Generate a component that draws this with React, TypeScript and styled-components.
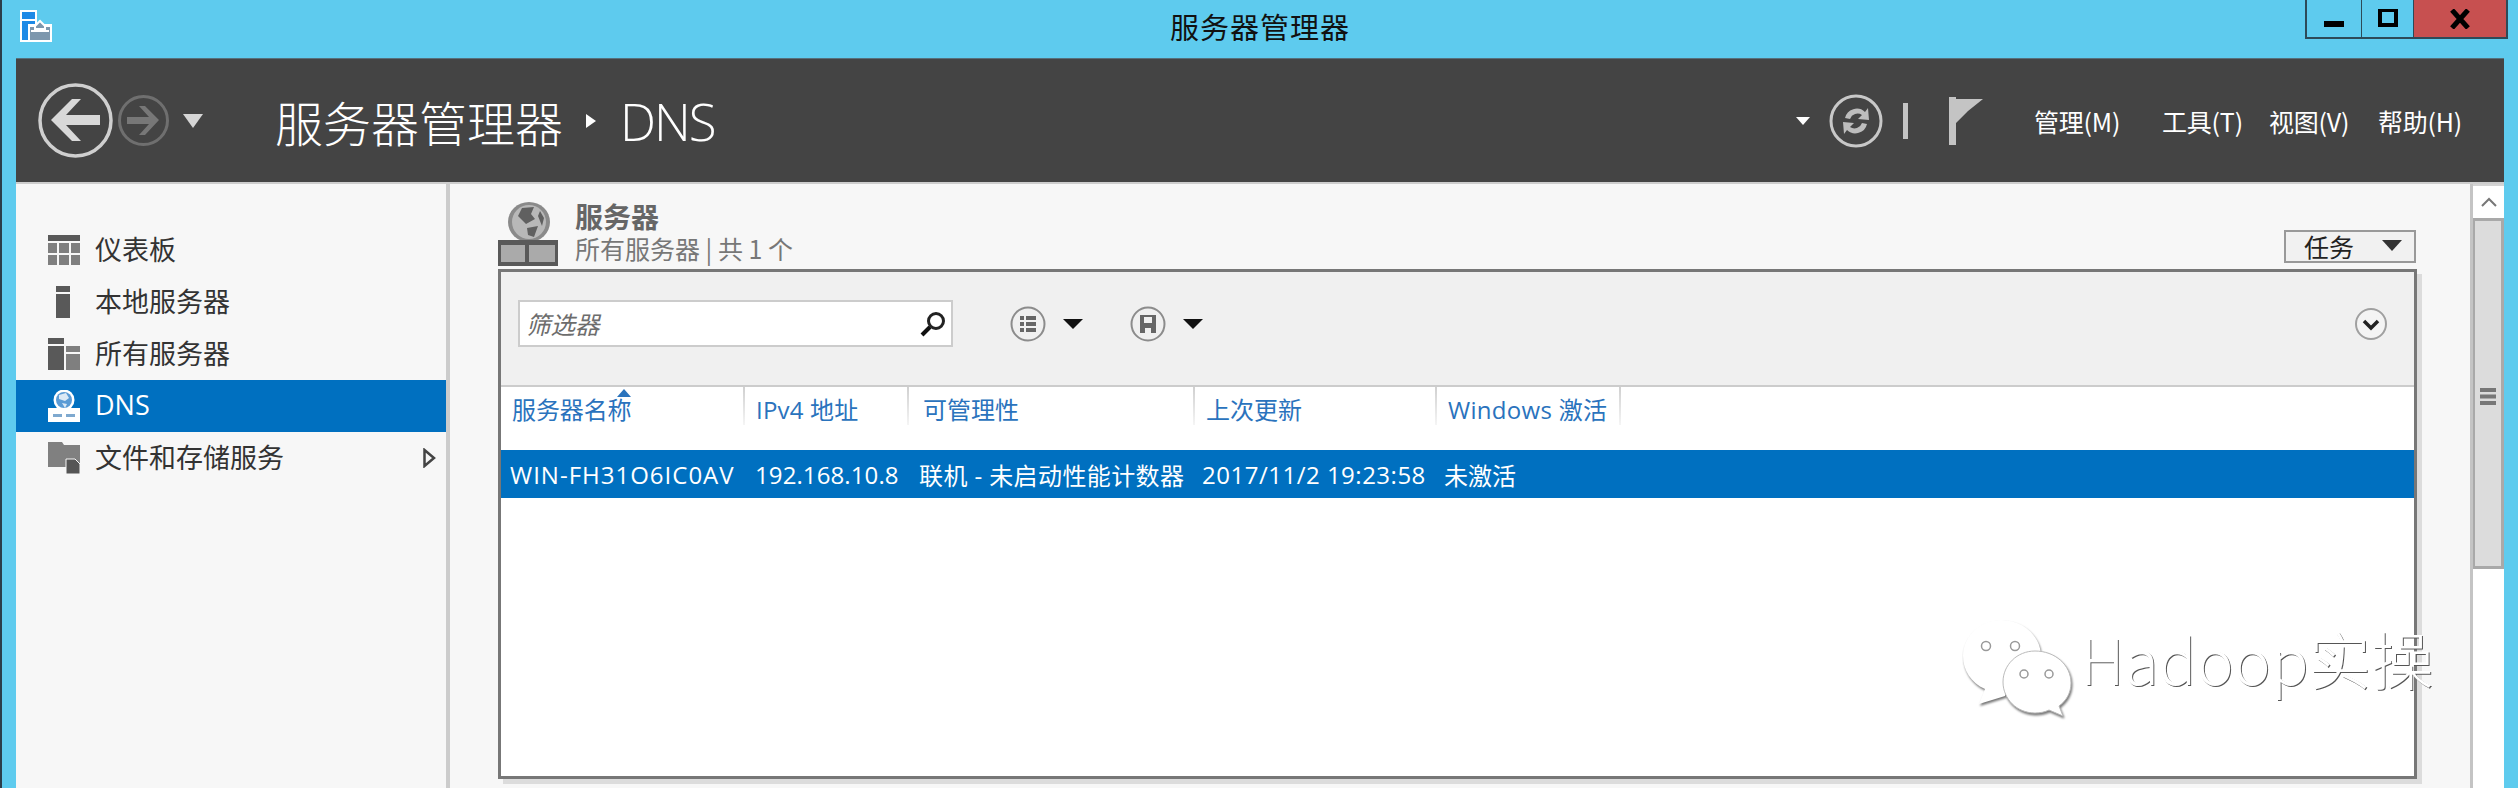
import styled, { createGlobalStyle } from "styled-components";

const CJK = `"Noto Sans CJK SC", "Noto Sans", sans-serif`;
const LATIN = `"Open Sans", "Noto Sans CJK SC", sans-serif`;

const GlobalStyle = createGlobalStyle`
  html, body {
    margin: 0;
    padding: 0;
    background: #5ecbee;
  }
  * {
    box-sizing: border-box;
  }
`;

const Shell = styled.div`
  width: 2518px;
  height: 788px;
  overflow: hidden;
  position: relative;
  display: flex;
  flex-direction: column;
  background: #5ecbee;
  border-left: 2px solid #2b3e4a;
  font-family: ${CJK};
`;

const TitleBar = styled.header`
  height: 58px;
  flex: none;
  display: grid;
  grid-template-columns: 1fr auto 1fr;
  align-items: start;
`;

const AppIcon = styled.svg`
  display: block;
  margin: 10px 0 0 18px;
`;

const WindowTitle = styled.div`
  font-size: 29px;
  line-height: 52px;
  color: #111;
  letter-spacing: 1px;
`;

const WindowButtons = styled.div`
  justify-self: end;
  margin-right: 10px;
  height: 39px;
  display: flex;
  border: 2px solid #2d4a58;
  border-top: none;
`;

const WindowButton = styled.div<{ $w: number; $close?: boolean }>`
  width: ${(p) => p.$w}px;
  display: flex;
  align-items: center;
  justify-content: center;
  background: ${(p) => (p.$close ? "#c75050" : "transparent")};
  border-right: ${(p) => (p.$close ? "none" : "1px solid #2d4a58")};
`;

const Frame = styled.div`
  flex: 1;
  min-height: 0;
  display: flex;
  flex-direction: column;
  margin: 0 14px 0 14px;
`;

const CommandBar = styled.div`
  height: 126px;
  flex: none;
  display: flex;
  align-items: center;
  padding: 0 43px 0 22px;
  background: #444444;
  border-bottom: 2px solid #cdcdcd;
  border-top: 1px solid #56707c;
`;

const NavGroup = styled.div`
  display: flex;
  align-items: center;
`;

const Crumb = styled.div`
  display: flex;
  align-items: center;
  margin-left: 72px;
  color: #fff;
  font-size: 48px;
  font-weight: 300;
  line-height: 60px;
`;

const CrumbArrow = styled.span`
  width: 0;
  height: 0;
  margin: 0 24px 0 23px;
  border-left: 10px solid #fff;
  border-top: 7px solid transparent;
  border-bottom: 7px solid transparent;
`;

const CrumbLeaf = styled.span`
  font-family: ${LATIN};
  font-size: 51px;
  font-weight: 300;
  letter-spacing: -2px;
`;

const CommandRight = styled.div`
  margin-left: auto;
  display: flex;
  align-items: center;
`;

const Caret = styled.span<{ $w: number; $h: number; $color: string; $ml?: number }>`
  display: block;
  flex: none;
  width: 0;
  height: 0;
  margin-left: ${(p) => p.$ml ?? 0}px;
  border-left: ${(p) => p.$w / 2}px solid transparent;
  border-right: ${(p) => p.$w / 2}px solid transparent;
  border-top: ${(p) => p.$h}px solid ${(p) => p.$color};
`;

const BarSeparator = styled.span`
  width: 5px;
  height: 36px;
  margin: 0 41px 0 20px;
  background: #c4c4c4;
`;

const MenuItem = styled.span<{ $ml: number; $w: number }>`
  margin-left: ${(p) => p.$ml}px;
  width: ${(p) => p.$w}px;
  color: #fff;
  font-size: 25px;
  line-height: 30px;
  letter-spacing: -0.2px;
  white-space: nowrap;
`;

const Body = styled.div`
  flex: 1;
  min-height: 0;
  display: flex;
  background: #f7f7f7;
`;

const Sidebar = styled.nav`
  width: 434px;
  flex: none;
  padding-top: 40px;
  border-right: 4px solid #cccccc;
`;

const NavItem = styled.div<{ $active?: boolean }>`
  height: 52px;
  display: flex;
  align-items: center;
  padding-left: 32px;
  gap: 15px;
  font-size: 27px;
  color: ${(p) => (p.$active ? "#fff" : "#333")};
  background: ${(p) => (p.$active ? "#0070c0" : "transparent")};
`;

const NavIcon = styled.svg`
  width: 32px;
  height: 32px;
  flex: none;
`;

const NavLabel = styled.span<{ $latin?: boolean }>`
  flex: 1;
  padding-bottom: 3px;
  font-family: ${(p) => (p.$latin ? LATIN : CJK)};
`;

const ExpandArrow = styled.svg`
  margin-right: 10px;
`;

const Main = styled.main`
  flex: 1;
  min-width: 0;
  padding: 0 53px 9px 48px;
  display: flex;
  flex-direction: column;
`;

const SectionHead = styled.div`
  height: 85px;
  flex: none;
  display: flex;
  align-items: flex-end;
`;

const SectionIcon = styled.svg`
  margin-bottom: 3px;
  flex: none;
`;

const SectionText = styled.div`
  margin: 0 0 6px 17px;
  display: flex;
  flex-direction: column;
`;

const SectionTitle = styled.div`
  font-size: 28px;
  line-height: 34px;
  font-weight: 700;
  color: #666;
`;

const SectionSub = styled.div`
  font-size: 25px;
  line-height: 30px;
  color: #777;
`;

const TaskButton = styled.div`
  margin: 0 1px 6px auto;
  width: 132px;
  height: 33px;
  display: flex;
  align-items: center;
  padding: 0 12px 2px 18px;
  justify-content: space-between;
  border: 2px solid #999;
  background: #f1f1f1;
  font-size: 25px;
  color: #222;
`;

const Panel = styled.section`
  flex: 1;
  min-height: 0;
  display: flex;
  flex-direction: column;
  background: #fff;
  border: 3px solid #777;
  box-shadow: 5px 5px 0 #dcdcdc;
`;

const Toolbar = styled.div`
  height: 115px;
  flex: none;
  display: flex;
  align-items: center;
  padding: 0 27px 10px 17px;
  background: #f0f0f0;
  border-bottom: 2px solid #cccccc;
`;

const FilterBox = styled.div`
  width: 435px;
  height: 47px;
  display: flex;
  align-items: center;
  justify-content: space-between;
  padding: 0 5px 0 6px;
  background: #fff;
  border: 2px solid #cccccc;
`;

const FilterHint = styled.span`
  font-size: 24.5px;
  font-style: italic;
  color: #6d6d6d;
`;

const ToolGroup = styled.div<{ $ml: number }>`
  display: flex;
  align-items: center;
  gap: 17px;
  margin-left: ${(p) => p.$ml}px;
`;

const CollapseIcon = styled.svg`
  margin-left: auto;
`;

const ColumnRow = styled.div`
  height: 63px;
  flex: none;
  display: flex;
  position: relative;
`;

const Column = styled.div<{ $w: number; $pl: number; $ls: number }>`
  width: ${(p) => p.$w}px;
  height: 38px;
  flex: none;
  padding: 8px 0 0 ${(p) => p.$pl}px;
  display: flex;
  align-items: center;
  position: relative;
  font-size: 24px;
  line-height: 32px;
  letter-spacing: ${(p) => p.$ls}px;
  color: #2a73bd;
  font-family: ${LATIN};
  white-space: nowrap;
  border-right: 2px solid;
  border-image: linear-gradient(#cfcfcf, #f6f6f6) 1;
`;

const SortMark = styled.span`
  position: absolute;
  left: 116px;
  top: 2px;
  width: 0;
  height: 0;
  border-left: 7px solid transparent;
  border-right: 7px solid transparent;
  border-bottom: 8px solid #2a73bd;
`;

const DataRow = styled.div`
  height: 48px;
  flex: none;
  display: flex;
  align-items: center;
  background: #0070c0;
  color: #fff;
  font-family: ${LATIN};
  font-size: 24px;
`;

const Cell = styled.span<{ $w: number; $pl: number; $ls?: number }>`
  width: ${(p) => p.$w}px;
  flex: none;
  padding-left: ${(p) => p.$pl}px;
  white-space: nowrap;
  letter-spacing: ${(p) => p.$ls ?? 0}px;
`;

const ScrollBar = styled.aside`
  width: 34px;
  flex: none;
  display: flex;
  flex-direction: column;
  background: #fff;
  border-left: 3px solid #c4c4c4;
`;

const ScrollUp = styled.div`
  height: 34px;
  flex: none;
  display: flex;
  align-items: center;
  justify-content: center;
  background: #fff;
  border-top: 2px solid #d4d4d4;
`;

const ScrollThumb = styled.div`
  height: 351px;
  flex: none;
  display: flex;
  justify-content: center;
  padding-top: 167px;
  background: #dcdcdc;
  border: 3px solid #a9a9a9;
  border-left-width: 2px;
`;

const Watermark = styled.div`
  position: absolute;
  left: 1959px;
  top: 618px;
  display: flex;
  align-items: flex-start;
  pointer-events: none;
`;

const WatermarkLogo = styled.svg`
  filter: drop-shadow(1px 2px 1px rgba(60, 60, 60, 0.7));
`;

const WatermarkText = styled.span`
  margin: -5px 0 0 7px;
  font-family: ${CJK};
  font-size: 62.5px;
  font-weight: 300;
  line-height: 90px;
  color: #fff;
  white-space: nowrap;
  text-shadow: 1px 1px 0 #555;
`;

const columns = [
  { w: 244, pl: 11, ls: -0.1, label: "服务器名称" },
  { w: 164, pl: 11, ls: 0.2, label: "IPv4 地址" },
  { w: 286, pl: 14, ls: 0, label: "可管理性" },
  { w: 242, pl: 11, ls: 0, label: "上次更新" },
  { w: 184, pl: 11, ls: 0.3, label: "Windows 激活" },
];

const cells = [
  { w: 243, pl: 9, text: "WIN-FH31O6IC0AV", ls: 1 },
  { w: 165, pl: 11, text: "192.168.10.8", ls: 0.1 },
  { w: 284, pl: 10, text: "联机 - 未启动性能计数器", ls: 0.4 },
  { w: 243, pl: 9, text: "2017/11/2 19:23:58", ls: 0.5 },
  { w: 100, pl: 8, text: "未激活", ls: 0 },
];

export default function App() {
  return (
    <Shell>
      <GlobalStyle />
      <TitleBar>
        <AppIcon width="32" height="32" viewBox="0 0 32 32">
          <rect x="0" y="0" width="17" height="32" fill="#fff" />
          <rect x="2" y="2" width="13" height="7" fill="#1e8ae6" />
          <rect x="2" y="11" width="13" height="19" fill="#1e8ae6" />
          <path d="M8 14 h24 v18 h-24 z" fill="#fff" />
          <path d="M10 17 h20 v13 h-20 z" fill="#7d97ad" />
          <path d="M15 16 l5 -5 l5 5 v3 h-10 z" fill="#7d97ad" stroke="#fff" strokeWidth="2" />
          <path d="M11 21 h18" stroke="#fff" strokeWidth="2" />
        </AppIcon>
        <WindowTitle>服务器管理器</WindowTitle>
        <WindowButtons>
          <WindowButton $w={55}>
            <svg width="20" height="20" viewBox="0 0 20 20">
              <rect x="0" y="12" width="20" height="6" fill="#000" />
            </svg>
          </WindowButton>
          <WindowButton $w={52}>
            <svg width="20" height="20" viewBox="0 0 20 20">
              <rect x="2" y="1" width="16" height="15" fill="none" stroke="#000" strokeWidth="4" />
            </svg>
          </WindowButton>
          <WindowButton $w={92} $close>
            <svg width="20" height="20" viewBox="0 0 20 20">
              <path d="M2 1 L18 19 M18 1 L2 19" stroke="#000" strokeWidth="5" />
            </svg>
          </WindowButton>
        </WindowButtons>
      </TitleBar>
      <Frame>
        <CommandBar>
          <NavGroup>
            <svg width="75" height="75" viewBox="0 0 75 75">
              <circle cx="37.5" cy="37.5" r="35.5" fill="none" stroke="#cfcfcf" strokeWidth="3.5" />
              <path d="M13 37 L34 16 L43 16 L28 32 L62 32 L62 42 L28 42 L43 58 L34 58 Z" fill="#d8d8d8" />
            </svg>
            <svg width="51" height="51" viewBox="0 0 51 51" style={{ marginLeft: 5 }}>
              <circle cx="25.5" cy="25.5" r="24" fill="none" stroke="#6f6f6f" strokeWidth="3" />
              <path d="M41 25 L27 11 L21 11 L31 22 L9 22 L9 29 L31 29 L21 40 L27 40 Z" fill="#777" />
            </svg>
            <Caret $w={20} $h={14} $color="#d6d6d6" $ml={14} />
          </NavGroup>
          <Crumb>
            服务器管理器
            <CrumbArrow />
            <CrumbLeaf>DNS</CrumbLeaf>
          </Crumb>
          <CommandRight>
            <Caret $w={14} $h={8} $color="#fff" />
            <svg width="54" height="54" viewBox="0 0 54 54" style={{ marginLeft: 19 }}>
              <circle cx="27" cy="27" r="25" fill="none" stroke="#c8c8c8" strokeWidth="3" />
              <path d="M16 24 A12 12 0 0 1 36 18 L39 14 L40 26 L29 25 L33 21 A8 8 0 0 0 21 25 Z" fill="#bdbdbd" />
              <path d="M38 30 A12 12 0 0 1 18 36 L15 40 L14 28 L25 29 L21 33 A8 8 0 0 0 33 29 Z" fill="#bdbdbd" />
            </svg>
            <BarSeparator />
            <svg width="34" height="48" viewBox="0 0 34 48">
              <rect x="0" y="0" width="7" height="48" fill="#c4c4c4" />
              <path d="M7 2 H34 L19 14 L7 26 Z" fill="#c4c4c4" />
            </svg>
            <MenuItem $ml={51} $w={87}>管理(M)</MenuItem>
            <MenuItem $ml={41} $w={75}>工具(T)</MenuItem>
            <MenuItem $ml={32} $w={79}>视图(V)</MenuItem>
            <MenuItem $ml={30} $w={83}>帮助(H)</MenuItem>
          </CommandRight>
        </CommandBar>
        <Body>
          <Sidebar>
            <NavItem>
              <NavIcon viewBox="0 0 32 32">
                <rect x="0" y="1" width="32" height="6" fill="#595959" />
                <rect x="0" y="9" width="9" height="10" fill="#7f7f7f" />
                <rect x="11" y="9" width="10" height="10" fill="#7f7f7f" />
                <rect x="23" y="9" width="9" height="10" fill="#7f7f7f" />
                <rect x="0" y="21" width="9" height="10" fill="#7f7f7f" />
                <rect x="11" y="21" width="10" height="10" fill="#7f7f7f" />
                <rect x="23" y="21" width="9" height="10" fill="#7f7f7f" />
              </NavIcon>
              <NavLabel>仪表板</NavLabel>
            </NavItem>
            <NavItem>
              <NavIcon viewBox="0 0 32 32">
                <rect x="8" y="0" width="14" height="6" fill="#595959" />
                <rect x="8" y="8" width="14" height="24" fill="#595959" />
              </NavIcon>
              <NavLabel>本地服务器</NavLabel>
            </NavItem>
            <NavItem>
              <NavIcon viewBox="0 0 32 32">
                <rect x="0" y="0" width="16" height="6" fill="#595959" />
                <rect x="0" y="8" width="16" height="24" fill="#595959" />
                <rect x="18" y="8" width="14" height="6" fill="#7f7f7f" />
                <rect x="18" y="16" width="14" height="16" fill="#7f7f7f" />
              </NavIcon>
              <NavLabel>所有服务器</NavLabel>
            </NavItem>
            <NavItem $active>
              <NavIcon viewBox="0 0 32 32">
                <circle cx="16" cy="10" r="10.5" fill="#fff" />
                <circle cx="16" cy="10" r="8" fill="#5b9bd5" />
                <path d="M11 5 l7 -2 l3 5 l-4 3 l-6 -2 z M14 13 l5 1 l-2 4 z" fill="#dce9f5" />
                <rect x="0" y="18" width="32" height="14" fill="#fff" />
                <rect x="5" y="24" width="9" height="3" fill="#7fa9cf" />
                <rect x="18" y="24" width="9" height="3" fill="#7fa9cf" />
              </NavIcon>
              <NavLabel $latin>DNS</NavLabel>
            </NavItem>
            <NavItem>
              <NavIcon viewBox="0 0 32 32">
                <path d="M0 0 H14 L16 3 H32 V26 H18 V25 H0 Z" fill="#808080" />
                <path d="M18 17 H27 L32 22 V32 H18 Z" fill="#555" stroke="#f7f7f7" strokeWidth="1" />
              </NavIcon>
              <NavLabel>文件和存储服务</NavLabel>
              <ExpandArrow width="13" height="20" viewBox="0 0 13 20">
                <path d="M1.5 2 L11 10 L1.5 18 Z" fill="none" stroke="#444" strokeWidth="2.5" />
              </ExpandArrow>
            </NavItem>
          </Sidebar>
          <Main>
            <SectionHead>
              <SectionIcon width="60" height="64" viewBox="0 0 60 64">
                <ellipse cx="31" cy="20" rx="21" ry="20" fill="#8a8a8a" />
                <ellipse cx="31" cy="20" rx="17" ry="17" fill="#b8b8b8" />
                <path d="M24 6 L36 5 L33 12 L37 17 L28 22 L20 14 Z M29 26 L40 24 L36 35 L30 33 Z M42 9 L46 16 L44 24 L40 14 Z" fill="#606060" />
                <rect x="0" y="38" width="60" height="26" fill="#595959" />
                <rect x="3" y="43" width="24" height="17" fill="#aaaaaa" />
                <rect x="31" y="43" width="26" height="17" fill="#aaaaaa" />
              </SectionIcon>
              <SectionText>
                <SectionTitle>服务器</SectionTitle>
                <SectionSub>所有服务器 | 共 1 个</SectionSub>
              </SectionText>
              <TaskButton>
                任务
                <Caret $w={20} $h={11} $color="#333" />
              </TaskButton>
            </SectionHead>
            <Panel>
              <Toolbar>
                <FilterBox>
                  <FilterHint>筛选器</FilterHint>
                  <svg width="26" height="26" viewBox="0 0 26 26">
                    <circle cx="16" cy="10" r="7.5" fill="none" stroke="#222" strokeWidth="3" />
                    <path d="M10 16 L2 24" stroke="#111" strokeWidth="4" />
                  </svg>
                </FilterBox>
                <ToolGroup $ml={57}>
                  <svg width="36" height="36" viewBox="0 0 36 36">
                    <circle cx="18" cy="18" r="16.5" fill="none" stroke="#8c8c8c" strokeWidth="2" />
                    <path d="M10 10 h4 v4 h-4 z M16 10 h10 v4 h-10 z M10 16 h4 v4 h-4 z M16 16 h10 v4 h-10 z M10 22 h4 v4 h-4 z M16 22 h10 v4 h-10 z" fill="#666" />
                  </svg>
                  <Caret $w={20} $h={10} $color="#111" />
                </ToolGroup>
                <ToolGroup $ml={47}>
                  <svg width="36" height="36" viewBox="0 0 36 36">
                    <circle cx="18" cy="18" r="16.5" fill="none" stroke="#8c8c8c" strokeWidth="2" />
                    <path d="M10 9 h16 v18 h-5 v-5 h-6 v5 h-5 z" fill="#666" />
                    <rect x="14" y="11" width="8" height="6" fill="#f0f0f0" />
                  </svg>
                  <Caret $w={20} $h={10} $color="#111" />
                </ToolGroup>
                <CollapseIcon width="32" height="32" viewBox="0 0 32 32">
                  <circle cx="16" cy="16" r="15" fill="#f4f4f4" stroke="#a0a0a0" strokeWidth="2" />
                  <path d="M9 13 L16 20 L23 13" fill="none" stroke="#222" strokeWidth="3.5" />
                </CollapseIcon>
              </Toolbar>
              <ColumnRow>
                {columns.map((c, i) => (
                  <Column key={c.label} $w={c.w} $pl={c.pl} $ls={c.ls}>
                    {c.label}
                    {i === 0 && <SortMark />}
                  </Column>
                ))}
              </ColumnRow>
              <DataRow>
                {cells.map((c) => (
                  <Cell key={c.text} $w={c.w} $pl={c.pl} $ls={c.ls}>
                    {c.text}
                  </Cell>
                ))}
              </DataRow>
            </Panel>
          </Main>
          <ScrollBar>
            <ScrollUp>
              <svg width="16" height="10" viewBox="0 0 16 10">
                <path d="M1 9 L8 2 L15 9" fill="none" stroke="#777" strokeWidth="2" />
              </svg>
            </ScrollUp>
            <ScrollThumb>
              <svg width="16" height="17" viewBox="0 0 16 17">
                <path d="M0 0 h16 v4 h-16 z M0 6.5 h16 v4 h-16 z M0 13 h16 v4 h-16 z" fill="#777" />
              </svg>
            </ScrollThumb>
          </ScrollBar>
        </Body>
      </Frame>
      <Watermark>
        <WatermarkLogo width="112" height="100" viewBox="0 0 112 100">
          <path d="M40 2 C62 2 80 18 80 38 C80 42 79 46 78 50 C62 48 46 58 44 78 L18 86 L24 71 C10 65 2 52 2 38 C2 18 20 2 40 2 Z" fill="#fff" />
          <circle cx="25" cy="28" r="4.5" fill="#fff" stroke="#999" strokeWidth="1.5" />
          <circle cx="54" cy="28" r="4.5" fill="#fff" stroke="#999" strokeWidth="1.5" />
          <path d="M74 33 C94 33 110 47 110 65 C110 75 105 83 98 88 L102 98 L88 92 C84 94 79 95 74 95 C56 95 42 81 42 64 C42 47 56 33 74 33 Z" fill="#fff" stroke="#bbb" strokeWidth="1" />
          <circle cx="63" cy="56" r="4" fill="#fff" stroke="#999" strokeWidth="1.5" />
          <circle cx="88" cy="56" r="4" fill="#fff" stroke="#999" strokeWidth="1.5" />
        </WatermarkLogo>
        <WatermarkText>Hadoop实操</WatermarkText>
      </Watermark>
    </Shell>
  );
}
